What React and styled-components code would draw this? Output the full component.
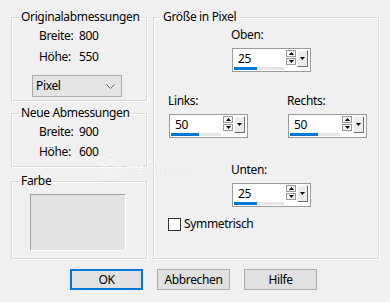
import React from "react";
import styled, { createGlobalStyle } from "styled-components";

const Global = createGlobalStyle`
  html, body { margin: 0; padding: 0; background: #f0f0f0; }
  body { font-family: "Noto Sans", "Liberation Sans", sans-serif; font-size: 12px; letter-spacing: -0.35px; color: #000; }
`;

const Page = styled.div`
  position: relative;
  width: 390px;
  height: 302px;
  box-sizing: border-box;
  padding: 9px 0 0 11px;
  background: #f0f0f0;
  overflow: hidden;
`;

const Main = styled.div`
  display: flex;
  align-items: flex-start;
  gap: 6px;
`;

const LeftCol = styled.div`
  display: flex;
  flex-direction: column;
  width: 136px;
`;

const Group = styled.fieldset`
  margin: ${(p) => p.$mt || 0}px 0 0 0;
  padding: 0 0 0 7px;
  width: ${(p) => p.$w}px;
  height: ${(p) => p.$h}px;
  box-sizing: border-box;
  min-width: 0;
  border: 1px solid #d9d9d9;
  box-shadow: inset 1px 1px 0 #fff, 1px 1px 0 #fff;
`;

const Legend = styled.legend`
  padding: 0 2px;
  font-size: 12px;
  line-height: 16px;
`;

const InfoList = styled.div`
  display: flex;
  flex-direction: column;
  gap: ${(p) => p.$gap}px;
  padding: 3px 0 0 20px;
`;

const InfoRow = styled.div`
  display: flex;
  line-height: 16px;
`;

const InfoLabel = styled.span`
  width: 40px;
  flex: none;
  text-align: left;
`;

const Select = styled.div`
  margin: 10px 0 0 13px;
  width: 90px;
  height: 22px;
  box-sizing: border-box;
  border: 1px solid #adadad;
  background: #e5e5e5;
  display: flex;
  align-items: center;
  justify-content: space-between;
  padding: 0 6px 0 3px;
  line-height: 16px;
`;

const Swatch = styled.div`
  margin: 5px 0 0 11px;
  width: 96px;
  height: 57px;
  box-sizing: border-box;
  border: 1px solid;
  border-color: #a0a0a0 #fff #fff #a0a0a0;
  background: #e3e3e3;
`;

const Row = styled.div`
  display: flex;
  margin-top: ${(p) => p.$mt}px;
`;

const Field = styled.div`
  display: flex;
  flex-direction: column;
  gap: 5px;
  margin-left: ${(p) => p.$x}px;
`;

const FieldLabel = styled.div`
  line-height: 16px;
`;

const Spin = styled.div`
  margin-left: 1px;
  width: 79px;
  height: 24px;
  box-sizing: border-box;
  border: 1px solid #9a9a9a;
  background: #fff;
  display: flex;
  align-items: flex-start;
  padding: 1px 2px 0 1px;
`;

const ValueArea = styled.div`
  width: 52px;
  display: flex;
  flex-direction: column;
`;

const ValueText = styled.div`
  padding-left: 4px;
  line-height: 16px;
  margin-top: 1px;
`;

const Track = styled.div`
  height: 3px;
  background: #e6e6e6;
`;

const Fill = styled.div`
  height: 3px;
  background: #0078d7;
`;

const Steppers = styled.div`
  margin-left: 2px;
  width: 11px;
  display: flex;
  flex-direction: column;
  gap: 1px;
`;

const StepBtn = styled.div`
  height: 7px;
  box-sizing: border-box;
  border: 1px solid #9a9a9a;
  background: #f4f4f4;
  display: flex;
  align-items: center;
  justify-content: center;
`;

const DropBtn = styled.div`
  margin-left: 1px;
  width: 11px;
  height: 17px;
  box-sizing: border-box;
  background: #ececec;
  border: 1px solid;
  border-color: #fff #6d6d6d #6d6d6d #fff;
  display: flex;
  align-items: center;
  justify-content: center;
`;

const CheckRow = styled.label`
  display: flex;
  align-items: center;
  margin: 9px 0 0 7px;
  line-height: 16px;
`;

const Box = styled.span`
  width: 13px;
  height: 13px;
  box-sizing: border-box;
  border: 1px solid #333;
  background: #fff;
  margin-right: 3px;
`;

const ButtonRow = styled.div`
  display: flex;
  gap: 14px;
  margin: 10px 0 0 59px;
`;

const Button = styled.div`
  width: 73px;
  height: 21px;
  box-sizing: border-box;
  border: ${(p) => (p.$default ? "2px solid #0078d7" : "1px solid #adadad")};
  background: #e1e1e1;
  display: flex;
  align-items: center;
  justify-content: center;
  line-height: 16px;
`;

const Watermark = styled.div`
  position: absolute;
  left: 100px;
  top: 155px;
  display: flex;
  align-items: center;
  pointer-events: none;
  opacity: 0.9;
`;

const WaterText = styled.span`
  margin-left: 2px;
  margin-top: 6px;
  font-family: "DejaVu Sans", sans-serif;
  font-style: italic;
  font-size: 10px;
  letter-spacing: 0.5px;
  color: #fff;
  text-shadow: 0 0 1px #c8c8c8;
`;

const Tri = ({ up }) => (
  <svg width="5" height="3" viewBox="0 0 5 3">
    <path d={up ? "M0 3 L2.5 0 L5 3 Z" : "M0 0 L2.5 3 L5 0 Z"} fill="#000" />
  </svg>
);

function SpinBox({ value, fill }) {
  return (
    <Spin>
      <ValueArea>
        <ValueText>{value}</ValueText>
        <Track>
          <Fill style={{ width: fill }} />
        </Track>
      </ValueArea>
      <Steppers>
        <StepBtn>
          <Tri up />
        </StepBtn>
        <StepBtn>
          <Tri />
        </StepBtn>
      </Steppers>
      <DropBtn>
        <Tri />
      </DropBtn>
    </Spin>
  );
}

function Info({ rows, gap }) {
  return (
    <InfoList $gap={gap}>
      {rows.map(([label, value]) => (
        <InfoRow key={label}>
          <InfoLabel>{label}</InfoLabel>
          <span>{value}</span>
        </InfoRow>
      ))}
    </InfoList>
  );
}

export default function App() {
  return (
    <>
      <Global />
      <Page>
        <Main>
          <LeftCol>
            <Group $w={136} $h={92}>
              <Legend>Originalabmessungen</Legend>
              <Info gap={5} rows={[["Breite:", "800"], ["Höhe:", "550"]]} />
              <Select>
                <span>Pixel</span>
                <svg width="9" height="5" viewBox="0 0 9 5">
                  <path d="M0.5 0.5 L4.5 4.5 L8.5 0.5" fill="none" stroke="#666" strokeWidth="1" />
                </svg>
              </Select>
            </Group>
            <Group $w={136} $h={62} $mt={4}>
              <Legend>Neue Abmessungen</Legend>
              <Info gap={4} rows={[["Breite:", "900"], ["Höhe:", "600"]]} />
            </Group>
            <Group $w={136} $h={86} $mt={6}>
              <Legend>Farbe</Legend>
              <Swatch />
            </Group>
          </LeftCol>
          <Group $w={226} $h={250}>
            <Legend>Größe in Pixel</Legend>
            <Row $mt={2}>
              <Field $x={70}>
                <FieldLabel>Oben:</FieldLabel>
                <SpinBox value="25" fill={23} />
              </Field>
            </Row>
            <Row $mt={21}>
              <Field $x={7}>
                <FieldLabel>Links:</FieldLabel>
                <SpinBox value="50" fill={28} />
              </Field>
              <Field $x={39}>
                <FieldLabel>Rechts:</FieldLabel>
                <SpinBox value="50" fill={28} />
              </Field>
            </Row>
            <Row $mt={24}>
              <Field $x={70}>
                <FieldLabel>Unten:</FieldLabel>
                <SpinBox value="25" fill={23} />
              </Field>
            </Row>
            <CheckRow>
              <Box />
              Symmetrisch
            </CheckRow>
          </Group>
        </Main>
        <ButtonRow>
          <Button $default>OK</Button>
          <Button>Abbrechen</Button>
          <Button>Hilfe</Button>
        </ButtonRow>
        <Watermark>
          <svg width="22" height="24" viewBox="0 0 22 24">
            <path
              d="M11 1 L13.6 8.6 L21 8.8 L15.2 13.6 L17.4 21.5 L11 16.8 L4.6 21.5 L6.8 13.6 L1 8.8 L8.4 8.6 Z"
              fill="none"
              stroke="#fff"
              strokeWidth="2"
            />
            <path
              d="M11 1 L13.6 8.6 L21 8.8 L15.2 13.6 L17.4 21.5 L11 16.8 L4.6 21.5 L6.8 13.6 L1 8.8 L8.4 8.6 Z"
              fill="none"
              stroke="#d0d0d0"
              strokeWidth="0.5"
            />
          </svg>
          <WaterText>STEFANKO06</WaterText>
        </Watermark>
      </Page>
    </>
  );
}
